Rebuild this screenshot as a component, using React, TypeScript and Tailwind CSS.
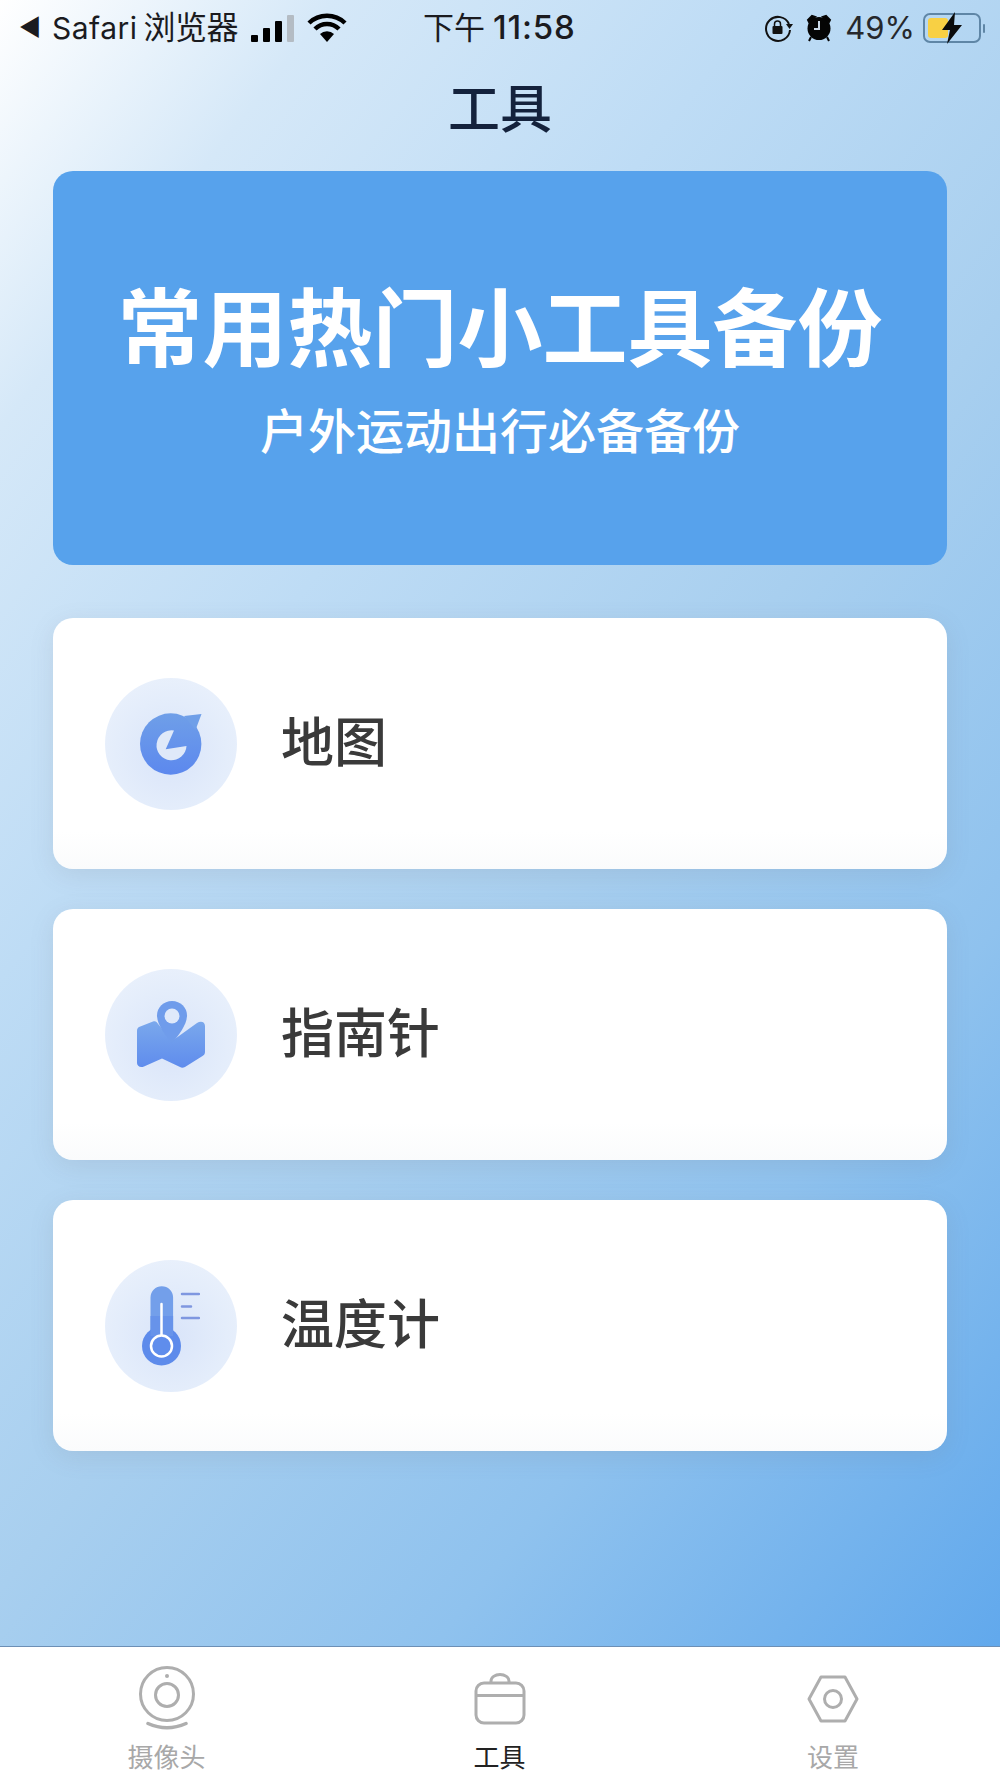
import React from 'react';

const CJK = 'font-["Inter","Noto_Sans_CJK_SC",sans-serif]';

const CompassIcon = () => (
  <svg width="62" height="62" viewBox="0 0 62 62">
    <defs>
      <linearGradient id="cg" x1="0" y1="0" x2="0" y2="1">
        <stop offset="0" stopColor="#6f9fe8" />
        <stop offset="1" stopColor="#5c88ee" />
      </linearGradient>
    </defs>
    <circle cx="30.700" cy="31" r="30.700" fill="url(#cg)" />
    <path d="M44 3L61.500 1 55.500 17z" fill="#6f9fe8" />
    <path d="M34 17.500A15 15 0 1 0 46.500 33L25.700 36.300z" fill="#dfe9f9" />
  </svg>
);

const MapIcon = () => (
  <svg width="68" height="67" viewBox="0 0 68 67">
    <defs>
      <linearGradient id="mg" x1="0" y1="0" x2="0" y2="1">
        <stop offset="0" stopColor="#7aa8ec" />
        <stop offset="1" stopColor="#5f8ced" />
      </linearGradient>
    </defs>
    <path d="M2 26L16 20.500c1.500-.5 2.500-.5 3.500.5L35 40l25-18c4-2.500 8-1 8 3v26c0 2-1 3-2.500 4L48 66c-2 1-3.500 1-5 0L25 57.500 7 65.500C3 67 0 65 0 62V30c0-2 .5-3 2-4z" fill="url(#mg)" />
    <path d="M35 0c8.500 0 15 6.500 15 14.500C50 24 41 35 35 42 29 35 20 24 20 14.500 20 6.500 26.500 0 35 0z" fill="#6f9ceb" />
    <circle cx="35" cy="15" r="7.500" fill="#dfe9fa" />
  </svg>
);

const ThermoIcon = () => (
  <svg width="58" height="80" viewBox="0 0 58 80">
    <path d="M8.500 11.500a11.300 11.300 0 0 1 22.600 0V45L8.500 45z" fill="#739fea" />
    <circle cx="19.500" cy="60" r="19.500" fill="#5d8beb" />
    <rect x="8.500" y="30" width="22.600" height="20" fill="#6793ea" />
    <path d="M19.500 18v32" stroke="#fff" strokeWidth="2.500" strokeLinecap="round" />
    <circle cx="19.500" cy="60" r="10.500" fill="#5f8dec" stroke="#fff" strokeWidth="2.500" />
    <path d="M40 8h17M40 20.500h9M40 32h17" stroke="#7f97e0" strokeWidth="2.500" strokeLinecap="round" />
  </svg>
);

const CameraTab = () => (
  <svg width="60" height="66" viewBox="0 0 60 66" fill="none" stroke="#aeaeae">
    <circle cx="30" cy="29" r="26.500" strokeWidth="3" />
    <circle cx="30" cy="30" r="11.500" strokeWidth="3" />
    <circle cx="30" cy="11" r="2" fill="#aeaeae" stroke="none" />
    <path d="M11 58.500Q30 67 49 58.500" strokeWidth="3.500" strokeLinecap="round" />
  </svg>
);

const BagTab = () => (
  <svg width="52" height="52" viewBox="0 0 52 52" fill="none" stroke="#aeaeae" strokeWidth="3">
    <rect x="2" y="10" width="48" height="40" rx="8" />
    <path d="M2 22.500h48" />
    <path d="M17 10V8a9 6.500 0 0 1 18 0v2" />
  </svg>
);

const NutTab = () => (
  <svg width="52" height="48" viewBox="0 0 52 48" fill="none" stroke="#aeaeae" strokeWidth="3" strokeLinejoin="round">
    <path d="M14 2h24l12 22-12 22H14L2 24z" />
    <circle cx="26" cy="24" r="8.500" />
  </svg>
);

const tools = [
  { name: '地图', icon: <CompassIcon /> },
  { name: '指南针', icon: <MapIcon /> },
  { name: '温度计', icon: <ThermoIcon /> },
];

const App: React.FC = () => {
  return (
    <div className={`w-[1000px] h-[1778px] flex flex-col overflow-hidden ${CJK} bg-[linear-gradient(128deg,#ffffff_0%,#d5e8f8_14%,#bedcf5_32%,#a8cfef_52%,#8fc2ee_72%,#59a4ec_100%)]`}>
      {/* status bar */}
      <div className="h-[56px] flex items-center pl-[19px] text-[#1b1b1f] relative">
        <span className="text-[24px] w-[33px]">◀</span>
        <span className="text-[30px] tracking-[0.5px]">Safari</span>
        <span className="text-[32px] ml-[6px] tracking-[-0.5px]">浏览器</span>
        <div className="ml-[13px] flex items-end gap-[5px] h-[27px]">
          <div className="w-[7px] h-[7px] bg-black rounded-[1px]" />
          <div className="w-[7px] h-[14px] bg-black rounded-[1px]" />
          <div className="w-[7px] h-[21px] bg-black rounded-[1px]" />
          <div className="w-[7px] h-[27px] bg-[#b4bcc4] rounded-[1px]" />
        </div>
        <svg className="ml-[13px]" width="40" height="30" viewBox="0 0 40 30">
          <path d="M2 10a26 26 0 0 1 36 0M8 16a17 17 0 0 1 24 0" fill="none" stroke="#000" strokeWidth="4.500" />
          <path d="M13 21a10 10 0 0 1 14 0l-7 8z" fill="#000" />
        </svg>
        <div className="absolute left-[423px] flex items-center">
          <span className="text-[31px]">下午</span>
          <span className="text-[33px] ml-[8px] font-medium tracking-[0.8px]">11:58</span>
        </div>
        <div className="ml-auto flex items-center">
          <svg width="30" height="30" viewBox="0 0 30 30" fill="none">
            <path d="M26 11A12 12 0 1 0 27 17" stroke="#111" strokeWidth="2" />
            <path d="M23 11h7l-3.500 5z" fill="#111" />
            <rect x="9.500" y="13" width="10" height="8" rx="1" fill="#111" />
            <path d="M11.500 13v-2a3 3 0 0 1 6 0v2" stroke="#111" strokeWidth="1.500" />
          </svg>
          <svg className="ml-[12px]" width="28" height="30" viewBox="0 0 28 30">
            <circle cx="14" cy="15.500" r="11.500" fill="#050505" />
            <path d="M3 7l4-4 3 1-6 5zM25 7l-4-4-3 1 6 5zM6 24l-2 4M22 24l2 4" stroke="#050505" strokeWidth="2" />
            <path d="M14 8v8h-5" stroke="#c9d8e8" strokeWidth="2" fill="none" />
          </svg>
          <span className="ml-[12px] text-[31px] text-[#26282c]">49%</span>
          <div className="ml-[8px] relative w-[58px] h-[30px] rounded-[7px] border-2 border-[#5f86a6] p-[3px] flex">
            <div className="w-[20px] h-full bg-[#f8d044] rounded-[3px]" />
            <svg className="absolute left-[15px] -top-[3px]" width="24" height="32" viewBox="0 0 24 32">
              <path d="M15 0L2 18h8L7 32l15-19h-8z" fill="#0b0b0b" />
            </svg>
          </div>
          <div className="ml-[2px] w-[2px] h-[9px] bg-[#5f86a6] rounded-full mr-[15px]" />
        </div>
      </div>

      {/* title */}
      <div className="h-[115px] flex items-center justify-center text-[52px] leading-none font-medium text-[#14223c] pb-[8px]">
        工具
      </div>

      <div className="flex-1 px-[53px] flex flex-col">
        {/* hero */}
        <div className="h-[394px] rounded-[20px] bg-[#57a2ec] text-white flex flex-col items-center pt-[109px]">
          <div className="text-[85px] leading-[100px] font-semibold">常用热门小工具备份</div>
          <div className="text-[48px] leading-[60px] mt-[22px] font-medium">户外运动出行必备备份</div>
        </div>

        {/* tool rows */}
        <div className="mt-[53px] flex flex-col gap-[40px]">
          {tools.map((tool) => (
            <div
              key={tool.name}
              className="h-[251px] rounded-[20px] bg-[linear-gradient(180deg,#ffffff_85%,#fafbfc_100%)] shadow-[0_6px_24px_rgba(110,115,130,0.14)] flex items-center pl-[52px]"
            >
              <div className="w-[132px] h-[132px] rounded-full bg-[radial-gradient(circle_at_50%_58%,#d9e4f9_0%,#e4edfb_55%,#edf3fc_100%)] flex items-center justify-center">
                {tool.icon}
              </div>
              <span className="ml-[44px] text-[53px] font-medium text-[#3a3a3a]">{tool.name}</span>
            </div>
          ))}
        </div>
      </div>

      {/* tab bar */}
      <div className="h-[132px] bg-white border-t border-[#6d8fb5] flex pt-[18px]">
        <div className="w-[333px] flex flex-col items-center text-[#a8a8a8]">
          <div className="h-[78px]"><CameraTab /></div>
          <span className="text-[26px] leading-[30px]">摄像头</span>
        </div>
        <div className="w-[333px] flex flex-col items-center text-[#222222]">
          <div className="h-[78px] pt-[8px]"><BagTab /></div>
          <span className="text-[26px] leading-[30px]">工具</span>
        </div>
        <div className="w-[334px] flex flex-col items-center text-[#a8a8a8]">
          <div className="h-[78px] pt-[10px]"><NutTab /></div>
          <span className="text-[26px] leading-[30px]">设置</span>
        </div>
      </div>
    </div>
  );
};

export default App;
